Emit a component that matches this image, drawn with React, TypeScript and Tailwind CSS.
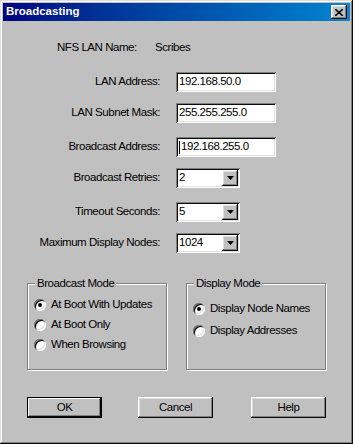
import React from "react";

const raised =
  "shadow-[inset_-1px_-1px_#0a0a0a,inset_1px_1px_#ffffff,inset_-2px_-2px_#808080,inset_2px_2px_#dfdfdf]";
const sunken =
  "shadow-[inset_1px_1px_#808080,inset_-1px_-1px_#ffffff,inset_2px_2px_#0a0a0a,inset_-2px_-2px_#dfdfdf]";

const font = { fontFamily: '"Liberation Sans", Arial, sans-serif' };

function Field({ label, value, caret }: { label: string; value: string; caret?: boolean }) {
  return (
    <div className="flex h-5 items-center">
      <span className="w-[157px] whitespace-nowrap text-right">{label}</span>
      <div className={`ml-4 flex h-5 w-[100px] items-center bg-white pl-[3px] ${sunken}`}>
        {caret ? <span className="mr-[1px] h-[13px] w-px bg-black" /> : null}
        <span>{value}</span>
      </div>
    </div>
  );
}

function Combo({ label, value }: { label: string; value: string }) {
  return (
    <div className="flex h-5 items-center">
      <span className="w-[157px] whitespace-nowrap text-right">{label}</span>
      <div className={`ml-4 flex h-5 w-16 items-center bg-white p-[2px] pl-[3px] ${sunken}`}>
        <span className="flex-1">{value}</span>
        <div className={`flex h-4 w-4 items-center justify-center bg-[#c0c0c0] ${raised}`}>
          <svg width="7" height="4" viewBox="0 0 7 4">
            <path d="M0 0h7L3.5 4z" fill="#000" />
          </svg>
        </div>
      </div>
    </div>
  );
}

function Radio({ label, checked }: { label: string; checked?: boolean }) {
  return (
    <div className="flex items-center gap-[5px] whitespace-nowrap">
      <span className="flex h-3 w-3 shrink-0 items-center justify-center rounded-full bg-white shadow-[inset_1px_1px_#808080,inset_-1px_-1px_#ffffff,inset_2px_2px_#0a0a0a,inset_-2px_-2px_#dfdfdf]">
        {checked ? <span className="h-1 w-1 rounded-full bg-black" /> : null}
      </span>
      <span>{label}</span>
    </div>
  );
}

function Group({ title, children, className }: { title: string; children: React.ReactNode; className?: string }) {
  return (
    <div
      className={`relative h-[87px] w-[140px] border border-[#808080] shadow-[1px_1px_0_#ffffff,inset_1px_1px_0_#ffffff] ${className ?? ""}`}
    >
      <span className="absolute -top-[8px] left-[7px] whitespace-nowrap bg-[#c0c0c0] px-[2px] leading-[14px]">
        {title}
      </span>
      {children}
    </div>
  );
}

function Button({ label, isDefault }: { label: string; isDefault?: boolean }) {
  return (
    <div
      className={`flex h-[21px] w-[75px] items-center justify-center bg-[#c0c0c0] ${
        isDefault
          ? "shadow-[inset_0_0_0_1px_#000000,inset_-2px_-2px_#0a0a0a,inset_2px_2px_#ffffff,inset_-3px_-3px_#808080]"
          : raised
      }`}
    >
      {label}
    </div>
  );
}

export default function App() {
  return (
    <div
      className="h-[444px] w-[353px] bg-[#c0c0c0] p-[3px] text-[11.5px] tracking-[-0.45px] text-black shadow-[inset_-1px_-1px_#0a0a0a,inset_1px_1px_#dfdfdf,inset_-2px_-2px_#808080,inset_2px_2px_#ffffff]"
      style={font}
    >
      <div className="flex h-[18px] items-center bg-gradient-to-r from-[#000080] to-[#1084d0] pl-[3px] pr-[3px]">
        <span className="flex-1 text-[11.5px] font-bold tracking-normal text-white">Broadcasting</span>
        <div className={`flex h-[14px] w-4 items-center justify-center bg-[#c0c0c0] ${raised}`}>
          <svg width="8" height="7" viewBox="0 0 8 7">
            <path d="M0 0l8 7M8 0L0 7" stroke="#000" strokeWidth="1.6" />
          </svg>
        </div>
      </div>

      <div className="mt-[17px] flex h-5 items-center">
        <span className="ml-[54px] w-[98px]">NFS LAN Name:</span>
        <span>Scribes</span>
      </div>
      <div className="mt-[14px]">
        <Field label="LAN Address:" value="192.168.50.0" />
      </div>
      <div className="mt-[11px]">
        <Field label="LAN Subnet Mask:" value="255.255.255.0" />
      </div>
      <div className="mt-[14px]">
        <Field label="Broadcast Address:" value="192.168.255.0" caret />
      </div>
      <div className="mt-[11px]">
        <Combo label="Broadcast Retries:" value="2" />
      </div>
      <div className="mt-[14px]">
        <Combo label="Timeout Seconds:" value="5" />
      </div>
      <div className="mt-[11px]">
        <Combo label="Maximum Display Nodes:" value="1024" />
      </div>

      <div className="mt-[30px] flex">
        <Group title="Broadcast Mode" className="ml-6">
          <div className="flex flex-col pl-[6px] pt-[10px]">
            <div className="flex h-[21px] items-center">
              <Radio label="At Boot With Updates" checked />
            </div>
            <div className="flex h-5 items-center">
              <Radio label="At Boot Only" />
            </div>
            <div className="flex h-5 items-center">
              <Radio label="When Browsing" />
            </div>
          </div>
        </Group>
        <Group title="Display Mode" className="ml-[19px]">
          <div className="flex flex-col pl-[6px] pt-[14px]">
            <div className="flex h-[22px] items-center">
              <Radio label="Display Node Names" checked />
            </div>
            <div className="flex h-[22px] items-center">
              <Radio label="Display Addresses" />
            </div>
          </div>
        </Group>
      </div>

      <div className="mt-[27px] flex">
        <div className="ml-6">
          <Button label="OK" isDefault />
        </div>
        <div className="ml-[36px]">
          <Button label="Cancel" />
        </div>
        <div className="ml-[38px]">
          <Button label="Help" />
        </div>
      </div>
    </div>
  );
}
